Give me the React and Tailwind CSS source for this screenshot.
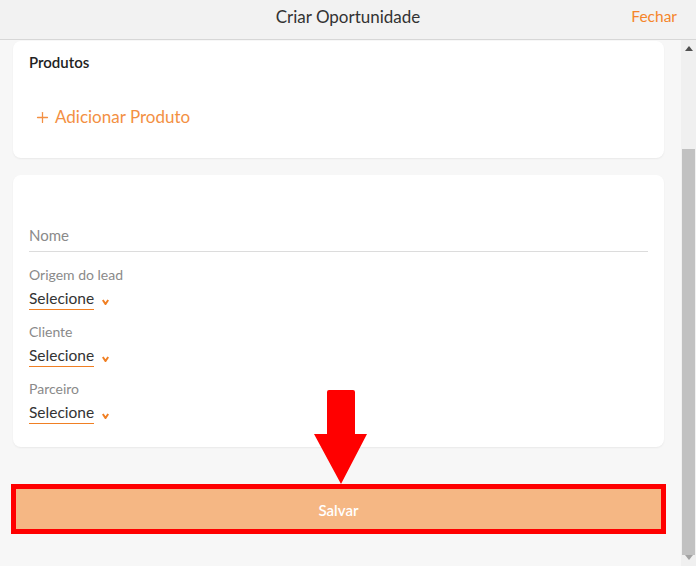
import { Plus } from 'lucide-react'

const font = { fontFamily: 'Lato, "Noto Sans", sans-serif' }

function SelectField({ label, first }) {
  return (
    <div className={first ? 'mt-[13px]' : 'mt-3'}>
      <p className="text-[14px] leading-5 text-[#8a8a8a]">{label}</p>
      <div className="mt-[3px] flex items-end">
        <span className="border-b border-[#f07f23] pb-px text-[15.5px] leading-5 text-[#333]">Selecione</span>
        <svg className="mb-[5px] ml-[8px]" width="7" height="6" viewBox="0 0 7 6">
          <path d="M0.8 1 L3.5 5 L6.2 1" fill="none" stroke="#f07f23" strokeWidth="2" />
        </svg>
      </div>
    </div>
  )
}

export default function App() {
  return (
    <div className="flex h-[566px] w-[696px] flex-col overflow-hidden bg-[#f7f7f7]" style={font}>
      <header className="relative flex h-10 shrink-0 items-center justify-center border-b border-[#d7d7d7] bg-[#f2f2f2] pb-[5px]">
        <h1 className="text-[17px] text-[#333]">Criar Oportunidade</h1>
        <button className="absolute right-[19px] text-[15.5px] text-[#f5852b]">Fechar</button>
      </header>

      <div className="flex min-h-0 flex-1">
        <div className="relative flex-1 pl-[13px] pr-[17px] pt-px">
          <section className="h-[117px] rounded-lg bg-white px-4 pt-[11px] shadow-[0_1px_2px_rgba(0,0,0,0.06)]">
            <h2 className="text-[15px] font-semibold leading-5 text-[#222]">Produtos</h2>
            <button className="mt-[33px] flex items-center text-[17px] leading-6 text-[#f39043]">
              <Plus className="ml-[5px] mr-[4px] h-[17px] w-[17px]" strokeWidth={1.8} />
              Adicionar Produto
            </button>
          </section>

          <section className="mt-[17px] h-[272px] rounded-lg bg-white px-4 pt-[50px] shadow-[0_1px_2px_rgba(0,0,0,0.06)]">
            <div className="border-b border-[#dcdcdc] pb-[6px] text-[15px] leading-5 text-[#8a8a8a]">Nome</div>
            <SelectField label="Origem do lead" first />
            <SelectField label="Cliente" />
            <SelectField label="Parceiro" />
          </section>

          <button className="-mx-[2px] mt-[37px] flex h-[50px] w-[calc(100%+4px)] items-center justify-center border-[5px] border-[#ff0000] bg-[#f5b784] pt-[2px] text-[15px] font-semibold text-white">
            Salvar
          </button>

          <svg className="absolute left-[314px] top-[350px]" width="53" height="94" viewBox="0 0 53 94">
            <path d="M13 2 Q13 0 15 0 L39 0 Q41 0 41 2 L41 44 L53 44 L27 94 L0 44 L13 44 Z" fill="#ff0000" />
          </svg>
        </div>

        <div className="flex w-[15px] shrink-0 flex-col bg-[#f0f0f0]">
          <div className="flex h-[17px] items-center justify-center">
            <svg width="8" height="5" viewBox="0 0 8 5"><path d="M0 5 L4 0 L8 5 Z" fill="#505050" /></svg>
          </div>
          <div className="flex-1 pt-[92px]">
            <div className="mx-px h-[406px] bg-[#c1c1c1]" />
          </div>
          <div className="flex h-[11px] items-start justify-center">
            <svg width="8" height="5" viewBox="0 0 8 5"><path d="M0 0 L8 0 L4 5 Z" fill="#a3a3a3" /></svg>
          </div>
        </div>
      </div>
    </div>
  )
}
